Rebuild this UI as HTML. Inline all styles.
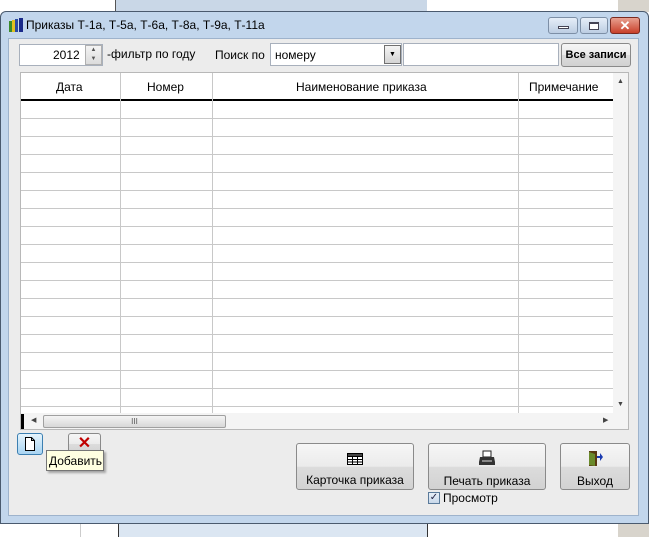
<!DOCTYPE html>
<html><head><meta charset="utf-8"><style>
*{box-sizing:border-box;margin:0;padding:0}
body{width:649px;height:537px;overflow:hidden;position:relative;background:#fff;font-family:"Liberation Sans",Arial,sans-serif;font-size:12px;color:#000}
.abs{position:absolute}
.win{left:0;top:11px;width:649px;height:513px;background:#c2d6ec;border:1px solid #4a5a6e;border-radius:6px 6px 0 0}
.client{left:8px;top:27px;width:631px;height:478px;background:#ececec;border:1px solid #9eb3cc}
.title{left:26px;top:8px;font-size:12px;color:#000}
.cap{top:6px;height:17px;border:1px solid #7d8fa6;border-radius:3px;background:linear-gradient(#e6eef8,#bccde2)}
.inp{background:#fff;border:1px solid #a8b0bc}
.btn{border:1px solid #8a8a8a;border-radius:3px;background:linear-gradient(#f6f6f6 0,#ebebeb 50%,#dcdcdc 51%,#d2d2d2);text-align:center;font-size:12px}
.grid{left:20px;top:72px;width:609px;height:358px;background:#fff;border:1px solid #b8b8b8;overflow:hidden}
.hl{position:absolute;left:0;width:592px;height:1px;background:#c8c8c8}
.vl{position:absolute;top:0;width:1px;height:340px;background:#c8c8c8}
</style></head><body>
<div class="abs" style="left:115px;top:0;width:312px;height:12px;background:#c9d7e7;border-left:1px solid #555"></div>
<div class="abs" style="left:618px;top:0;width:31px;height:12px;background:#d8d4cc"></div>
<div class="abs" style="left:0;top:524px;width:649px;height:13px;background:#fff"></div>
<div class="abs" style="left:118px;top:524px;width:310px;height:13px;background:#dbe6f2;border-left:1px solid #333;border-right:1px solid #333"></div>
<div class="abs" style="left:80px;top:524px;width:1px;height:13px;background:#ccc"></div>
<div class="abs" style="left:618px;top:524px;width:31px;height:13px;background:#d8d4cc"></div>

<div class="abs win"></div>
<svg class="abs" style="left:8px;top:17px" width="16" height="16"><rect x="1" y="4" width="3" height="11" fill="#3a8a2a"/><rect x="4" y="3" width="3" height="12" fill="#e0c020"/><rect x="7" y="2" width="3" height="13" fill="#2a4aa0"/><rect x="11" y="1" width="4" height="14" fill="#1a2a8a"/></svg>
<div class="abs title" style="top:18px">Приказы Т-1а, Т-5а, Т-6а, Т-8а, Т-9а, Т-11а</div>
<div class="abs cap" style="left:548px;top:17px;width:30px"><div style="margin:8px auto 0;width:11px;height:3px;border:1px solid #445;background:#fff"></div></div>
<div class="abs cap" style="left:580px;top:17px;width:28px"><div style="margin:4px auto 0;width:10px;height:8px;border:1px solid #445;border-top-width:2px;background:#fff"></div></div>
<div class="abs cap" style="left:610px;top:17px;width:30px;background:linear-gradient(#e8a090,#c8402a);border-color:#7a2a20;color:#fff;text-align:center;font-weight:bold;font-size:13px;line-height:15px">✕</div>

<div class="abs client" style="top:38px;height:478px"></div>

<div class="abs inp" style="left:19px;top:44px;width:84px;height:22px"></div>
<div class="abs" style="left:53px;top:48px">2012</div>
<div class="abs" style="left:85px;top:45px;width:17px;height:20px;border:1px solid #b0b0b0;background:linear-gradient(#f4f4f4,#dcdcdc);font-size:6px;color:#555;text-align:center;line-height:9px">▲<br>▼</div>
<div class="abs" style="left:107px;top:47px">-фильтр по году</div>
<div class="abs" style="left:215px;top:48px">Поиск по</div>
<div class="abs inp" style="left:270px;top:43px;width:132px;height:23px"></div>
<div class="abs" style="left:275px;top:48px">номеру</div>
<div class="abs" style="left:384px;top:45px;width:17px;height:19px;border:1px solid #707070;background:linear-gradient(#f4f4f4,#d4d4d4);font-size:7px;text-align:center;line-height:18px">▼</div>
<div class="abs inp" style="left:403px;top:43px;width:156px;height:23px"></div>
<div class="abs btn" style="left:561px;top:43px;width:70px;height:24px;font-weight:bold;font-size:11px;line-height:22px">Все записи</div>

<div class="abs grid">
  <div class="abs" style="left:0;top:0;width:592px;height:27px;background:#fff"></div>
  <div class="abs" style="left:35px;top:7px">Дата</div>
  <div class="abs" style="left:126px;top:7px">Номер</div>
  <div class="abs" style="left:275px;top:7px">Наименование приказа</div>
  <div class="abs" style="left:508px;top:7px">Примечание</div>
  <div class="abs" style="left:0;top:26px;width:592px;height:2px;background:#000"></div>
  <div class="abs" style="left:592px;top:0;width:16px;height:340px;background:#f4f4f4"></div>
  <div class="abs" style="left:596px;top:5px;font-size:7px;color:#444">▲</div>
  <div class="abs" style="left:596px;top:328px;font-size:7px;color:#444">▼</div>
  <div class="vl" style="left:99px"></div>
  <div class="vl" style="left:191px"></div>
  <div class="vl" style="left:497px"></div>
  <div class="hl" style="top:45px"></div><div class="hl" style="top:63px"></div><div class="hl" style="top:81px"></div><div class="hl" style="top:99px"></div><div class="hl" style="top:117px"></div><div class="hl" style="top:135px"></div><div class="hl" style="top:153px"></div><div class="hl" style="top:171px"></div><div class="hl" style="top:189px"></div><div class="hl" style="top:207px"></div><div class="hl" style="top:225px"></div><div class="hl" style="top:243px"></div><div class="hl" style="top:261px"></div><div class="hl" style="top:279px"></div><div class="hl" style="top:297px"></div><div class="hl" style="top:315px"></div><div class="hl" style="top:333px"></div>
  <div class="abs" style="left:0;top:340px;width:608px;height:17px;background:#f4f4f4"></div>
  <div class="abs" style="left:0;top:341px;width:3px;height:15px;background:#000"></div>
  <div class="abs" style="left:10px;top:343px;font-size:7px;color:#444">◀</div>
  <div class="abs" style="left:22px;top:342px;width:183px;height:13px;border:1px solid #a0a0a0;border-radius:2px;background:linear-gradient(#f4f4f4,#d8d8d8);text-align:center;font-size:8px;line-height:11px;color:#555">III</div>
  <div class="abs" style="left:582px;top:343px;font-size:7px;color:#444">▶</div>
</div>

<div class="abs" style="left:17px;top:433px;width:26px;height:22px;border:1px solid #3c7fb1;border-radius:3px;background:linear-gradient(#e6f4fc,#a8d4f2)"></div>
<svg class="abs" style="left:24px;top:437px" width="12" height="14"><path d="M1.5 .5h6l3 3v10h-9z M7.5 .5v3h3" fill="#fff" stroke="#000"/></svg>
<div class="abs btn" style="left:68px;top:433px;width:33px;height:22px;color:#c00000;font-weight:bold;font-size:16px;line-height:20px">✕</div>
<div class="abs" style="left:46px;top:450px;width:58px;height:21px;background:#ffffe1;border:1px solid #767676;padding:3px 0 0 2px;box-shadow:2px 2px 2px rgba(0,0,0,.3)">Добавить</div>

<div class="abs btn" style="left:296px;top:443px;width:118px;height:47px"><svg style="margin-top:9px" width="16" height="12"><rect x=".5" y=".5" width="15" height="11" fill="#fff" stroke="#000"/><path d="M0 3.5h16M0 6.5h16M0 9h16M5.5 0v12M10.5 0v12" stroke="#000"/><rect x="1" y="1" width="14" height="2" fill="#444"/></svg><div style="margin-top:5px">Карточка приказа</div></div>
<div class="abs btn" style="left:428px;top:443px;width:118px;height:47px"><svg style="margin-top:6px" width="18" height="16"><rect x="5" y="1" width="8" height="6" fill="#fff" stroke="#222"/><path d="M2 7h14l1 5v3H1v-3z" fill="#333"/><rect x="4" y="10" width="10" height="2" fill="#888"/></svg><div style="margin-top:5px">Печать приказа</div></div>
<div class="abs btn" style="left:560px;top:443px;width:70px;height:47px"><svg style="margin-top:6px" width="18" height="17"><rect x="3" y="1" width="8" height="15" fill="#5a3a10"/><path d="M3 2l6 2v12l-6-1z" fill="#6a8a2a"/><path d="M11 6h3v-3l3 4-3 4v-3h-3z" fill="#1a3ab0"/></svg><div style="margin-top:4px">Выход</div></div>

<div class="abs" style="left:428px;top:492px;width:12px;height:12px;border:1px solid #5a7a9a;background:linear-gradient(#e8f0f8,#c8d8ea);font-size:10px;line-height:10px;color:#224;text-align:center">✓</div>
<div class="abs" style="left:443px;top:491px">Просмотр</div>
</body></html>
